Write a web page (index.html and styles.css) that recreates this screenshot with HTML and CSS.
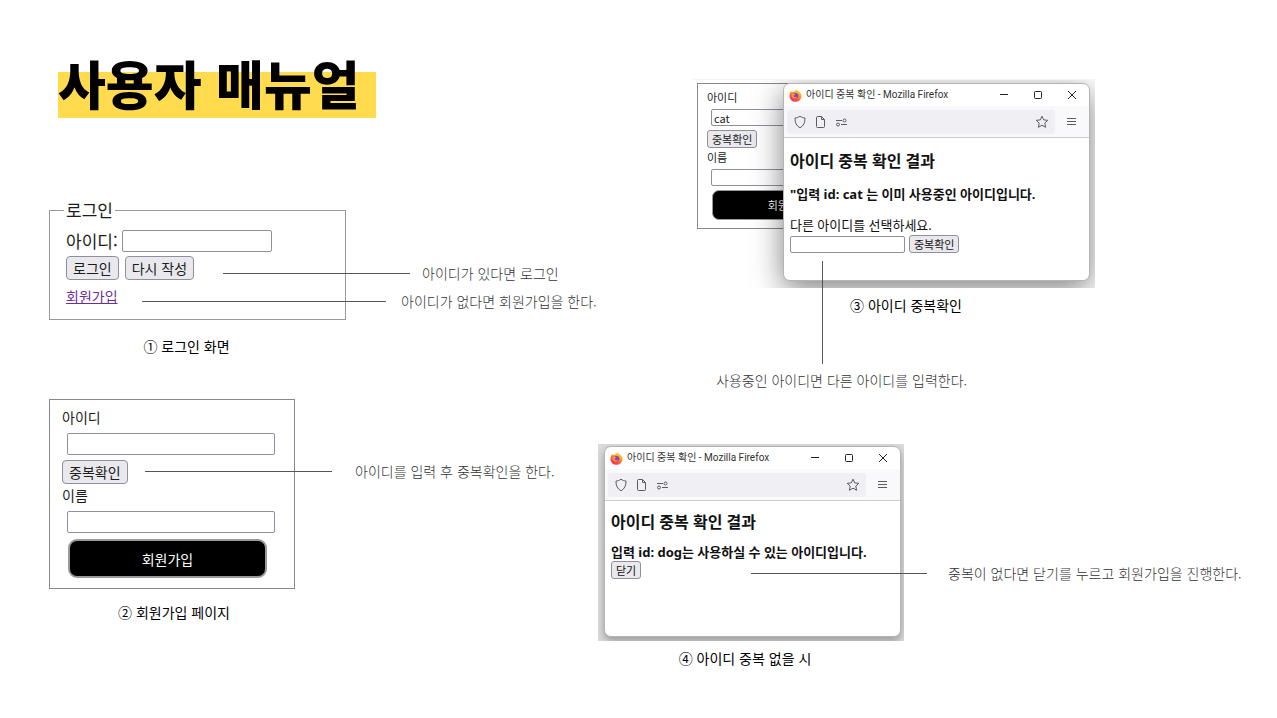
FILE: index.html
```html
<!DOCTYPE html>
<html lang="ko">
<head>
<meta charset="utf-8">
<meta name="viewport" content="width=device-width, initial-scale=1">
<title>사용자 매뉴얼</title>
<link rel="stylesheet" href="styles.css">
</head>
<body>
<svg class="sprite" aria-hidden="true">
  <defs>
    <linearGradient id="flame" x1="0.8" y1="0" x2="0.2" y2="1">
      <stop offset="0" stop-color="#ffe226"/><stop offset="0.45" stop-color="#ff8a1c"/><stop offset="1" stop-color="#f5156c"/>
    </linearGradient>
    <symbol id="firefox" viewBox="0 0 14 14">
      <path d="M2.2 2.4 3.6 3.6 5 2.6 5.4 3.4C6.400 1.800 7.600 1 8.800.6 8.700 1.600 9.500 2.200 10.400 2.800 11 2.900 13.600 4.600 13.500 7.800A6.500 6 0 0 1 .5 7.800C.5 5.400 1.200 4 2.200 2.400Z" fill="url(#flame)"/>
      <circle cx="7" cy="7.200" r="3" fill="#7542e5"/>
      <path d="M3 5.600C4.500 4.600 6 5 7 5.800 6.300 6.700 5.200 6.500 5 7.500 5.400 9.200 7.800 9.300 9 8.200 8.400 10.200 5.800 11 4.200 9.500 3 8.500 2.700 7 3 5.600Z" fill="#ff9a1f"/>
    </symbol>
    <symbol id="minimize" viewBox="0 0 10 10"><path d="M1 4.500H9" /></symbol>
    <symbol id="maximize" viewBox="0 0 10 10"><rect x="1.500" y="1.500" width="7" height="7" rx="1"/></symbol>
    <symbol id="close" viewBox="0 0 10 10"><path d="M1 1 9 9M9 1 1 9"/></symbol>
    <symbol id="shield" viewBox="0 0 14 14"><path d="M7 1.200C8.500 2.400 10.200 2.900 12 3 12.200 7.500 10.500 11 7 12.800 3.500 11 1.800 7.500 2 3 3.800 2.900 5.500 2.400 7 1.200Z"/></symbol>
    <symbol id="page" viewBox="0 0 14 14"><path d="M3.500 1.500H7.500L10.500 4.500V11.500A1 1 0 0 1 9.500 12.500H3.500A1 1 0 0 1 2.500 11.500V2.500A1 1 0 0 1 3.500 1.500ZM7.500 1.500V4.500H10.500"/></symbol>
    <symbol id="sliders" viewBox="0 0 14 14"><path d="M1 5.500H7M6 9.500H12"/><circle cx="9.500" cy="5.500" r="1.500"/><circle cx="3" cy="9.500" r="1.500"/></symbol>
    <symbol id="star" viewBox="0 0 14 14"><path d="M7 1.200 8.700 4.900 12.800 5.300 9.800 8.100 10.600 12.300 7 10.200 3.400 12.300 4.200 8.100 1.200 5.300 5.300 4.900Z"/></symbol>
    <symbol id="menu" viewBox="0 0 14 14"><path d="M2 3.500H11M2 6.500H11M2 9.500H11"/></symbol>
  </defs>
</svg>

<main class="slide">
  <section class="column">
    <h1 class="title">사용자 매뉴얼</h1>

    <figure class="step step-login">
      <form class="login">
        <fieldset class="login-box">
          <legend class="login-legend">로그인</legend>
          <div class="login-row"><label for="login-id">아이디:</label><input class="field login-field" id="login-id" type="text"></div>
          <div class="login-row buttons"><button class="button" type="button">로그인</button><button class="button" type="reset">다시 작성</button></div>
          <a class="join-link" href="#join">회원가입</a>
        </fieldset>
      </form>
      <figcaption class="caption">① 로그인 화면</figcaption>
      <p class="callout callout-login">아이디가 있다면 로그인</p>
      <p class="callout callout-join">아이디가 없다면 회원가입을 한다.</p>
    </figure>

    <figure class="step step-join" id="join">
      <form class="join">
        <label class="join-label" for="join-id">아이디</label>
        <input class="field join-field" id="join-id" type="text">
        <button class="button" type="button">중복확인</button>
        <label class="join-label" for="join-name">이름</label>
        <input class="field join-field" id="join-name" type="text">
        <button class="submit" type="button">회원가입</button>
      </form>
      <figcaption class="caption">② 회원가입 페이지</figcaption>
      <p class="callout callout-check">아이디를 입력 후 중복확인을 한다.</p>
    </figure>
  </section>

  <section class="column column-right">
    <figure class="step step-taken">
      <div class="shot shot-taken">
        <form class="join join-small">
          <label class="join-label" for="small-id">아이디</label>
          <input class="field join-field" id="small-id" type="text" value="cat">
          <button class="button small" type="button">중복확인</button>
          <label class="join-label" for="small-name">이름</label>
          <input class="field join-field" id="small-name" type="text">
          <button class="submit" type="button">회원가입</button>
        </form>
        <article class="window window-over">
          <header class="titlebar">
            <svg class="logo"><use href="#firefox"/></svg>
            <span class="window-title">아이디 중복 확인 - Mozilla Firefox</span>
            <button class="window-button" type="button" aria-label="최소화"><svg class="glyph"><use href="#minimize"/></svg></button>
            <button class="window-button" type="button" aria-label="최대화"><svg class="glyph"><use href="#maximize"/></svg></button>
            <button class="window-button" type="button" aria-label="창 닫기"><svg class="glyph"><use href="#close"/></svg></button>
          </header>
          <div class="toolbar">
            <div class="address">
              <svg class="icon"><use href="#shield"/></svg>
              <svg class="icon"><use href="#page"/></svg>
              <svg class="icon"><use href="#sliders"/></svg>
              <svg class="icon icon-end"><use href="#star"/></svg>
            </div>
            <button class="menu-button" type="button" aria-label="메뉴"><svg class="icon"><use href="#menu"/></svg></button>
          </div>
          <div class="page">
            <h2 class="page-title">아이디 중복 확인 결과</h2>
            <p class="page-result">"입력 id: cat 는 이미 사용중인 아이디입니다.</p>
            <label class="page-label" for="other-id">다른 아이디를 선택하세요.</label>
            <div class="page-row"><input class="field page-field" id="other-id" type="text"><button class="button small" type="button">중복확인</button></div>
          </div>
        </article>
      </div>
      <figcaption class="caption">③ 아이디 중복확인</figcaption>
      <p class="note">사용중인 아이디면 다른 아이디를 입력한다.</p>
    </figure>

    <figure class="step step-free">
      <div class="shot shot-free">
        <article class="window">
          <header class="titlebar">
            <svg class="logo"><use href="#firefox"/></svg>
            <span class="window-title">아이디 중복 확인 - Mozilla Firefox</span>
            <button class="window-button" type="button" aria-label="최소화"><svg class="glyph"><use href="#minimize"/></svg></button>
            <button class="window-button" type="button" aria-label="최대화"><svg class="glyph"><use href="#maximize"/></svg></button>
            <button class="window-button" type="button" aria-label="창 닫기"><svg class="glyph"><use href="#close"/></svg></button>
          </header>
          <div class="toolbar">
            <div class="address">
              <svg class="icon"><use href="#shield"/></svg>
              <svg class="icon"><use href="#page"/></svg>
              <svg class="icon"><use href="#sliders"/></svg>
              <svg class="icon icon-end"><use href="#star"/></svg>
            </div>
            <button class="menu-button" type="button" aria-label="메뉴"><svg class="icon"><use href="#menu"/></svg></button>
          </div>
          <div class="page page-free">
            <h2 class="page-title">아이디 중복 확인 결과</h2>
            <p class="page-result">입력 id: dog는 사용하실 수 있는 아이디입니다.</p>
            <button class="button small" type="button">닫기</button>
          </div>
        </article>
      </div>
      <figcaption class="caption">④ 아이디 중복 없을 시</figcaption>
      <p class="callout callout-close">중복이 없다면 닫기를 누르고 회원가입을 진행한다.</p>
    </figure>
  </section>
</main>
</body>
</html>
```

FILE: styles.css
```css
* { box-sizing: border-box; }

body {
  margin: 0;
  background: #fff;
  color: #1c1c1c;
  font-family: "Noto Sans CJK KR", sans-serif;
  font-size: 14px;
  line-height: 22px;
}

h1, h2, p, figure, fieldset { margin: 0; }
button, input { font-family: inherit; color: inherit; margin: 0; }
.sprite { position: absolute; width: 0; height: 0; }

.slide {
  display: grid;
  grid-template-columns: 598fr 679fr;
  align-items: start;
}
.column { padding: 58px 0 0 49px; }
.column-right { padding: 79px 0 0; }

.title {
  width: fit-content;
  margin-left: 9px;
  padding: 0 16px 10px 0;
  background: linear-gradient(transparent 14px, #ffdb4d 14px);
  color: #000;
  font-size: 52px;
  font-weight: 900;
  line-height: 50px;
  white-space: nowrap;
}

/* Steps and their captions */
.step { position: relative; }
.step-login { width: 297px; margin-top: 80px; }
.step-join { width: 246px; margin-top: 42px; }
.step-taken { width: 402px; margin-left: 95px; }
.step-free { width: 306px; margin-top: 53px; }

.caption {
  margin-top: 6px;
  color: #000;
  text-align: center;
  white-space: nowrap;
}
.step-login .caption { margin-top: 15px; padding-right: 22px; }
.step-join .caption { margin-top: 12px; padding-left: 4px; }
.step-taken .caption { padding-left: 24px; }
.step-free .caption { padding-right: 12px; }

/* Notes joined to a control by a leader line */
.callout, .note {
  color: #333;
  font-weight: 300;
  white-space: nowrap;
}
.callout {
  position: absolute;
  display: flex;
  align-items: center;
}
.callout::before {
  content: "";
  height: 1px;
  background: #555;
}
.callout-login { left: 174px; top: 64px; gap: 12px; }
.callout-join { left: 93px; top: 92px; gap: 15px; }
.callout-check { left: 96px; top: 61px; gap: 23px; }
.callout-close { left: 153px; top: 118px; gap: 21px; }
.callout-login::before { width: 187px; }
.callout-join::before { width: 244px; }
.callout-check::before { width: 187px; }
.callout-close::before { width: 176px; }

.note { margin: 53px 0 0 23px; }
.step-taken::after {
  content: "";
  position: absolute;
  left: 129px;
  top: 182px;
  width: 1px;
  height: 103px;
  background: #555;
}

/* Form controls */
.field {
  height: 22px;
  padding: 0 2px;
  border: 1px solid #8f8f9d;
  border-radius: 2px;
  background: #fff;
  font-size: 11px;
}
.button {
  height: 24px;
  padding: 0 6px;
  border: 1px solid #8f8f9d;
  border-radius: 4px;
  background: #e9e9ed;
  font-size: 14px;
  line-height: 20px;
}
.small {
  height: 18px;
  padding: 0 4px;
  border-radius: 3px;
  font-size: 11px;
  line-height: 16px;
}

.login-box {
  padding: 8px 16px 12px;
  border: 1px solid #999;
}
.login-legend {
  margin-left: -2px;
  padding: 0 2px;
  font-size: 17px;
  line-height: 24px;
}
.login-row {
  display: flex;
  align-items: center;
  gap: 4px;
  margin-bottom: 4px;
  font-size: 17px;
}
.login-field { width: 150px; }
.buttons { gap: 6px; }
.join-link {
  display: block;
  width: fit-content;
  margin-top: 5px;
  color: #6a2f9c;
}

.join {
  display: flex;
  flex-direction: column;
  align-items: flex-start;
  padding: 6px 12px 10px;
  border: 1px solid #888;
}
.join-field { width: 208px; margin: 5px 0 5px 5px; }
.submit {
  width: 199px;
  height: 39px;
  margin: 1px 0 0 6px;
  border: 2px solid #999;
  border-radius: 9px;
  background: #000;
  color: #fff;
  font-size: 14px;
  line-height: 20px;
}

.join-small {
  width: 200px;
  padding: 4px 9px 8px;
  font-size: 11px;
  line-height: 18px;
}
.join-small .join-field { width: 160px; height: 17px; margin: 3px 0 4px 4px; }
.join-small .submit {
  width: 152px;
  height: 30px;
  margin: 0 0 0 5px;
  border-width: 1px;
  border-radius: 7px;
  font-size: 11px;
}

/* Captured windows */
.shot { position: relative; overflow: hidden; }
.shot-taken { height: 209px; padding: 3px 4px; border-top: 1px solid #f4f4f4; }
.shot-free { height: 197px; padding: 2px 3px 4px 6px; background: #dcdcdc; }

.window {
  height: 100%;
  overflow: hidden;
  border: 1px solid #b4b4b4;
  border-radius: 7px;
  background: #fff;
  box-shadow: 0 4px 8px rgba(0, 0, 0, 0.3);
}
.window-over {
  position: absolute;
  left: 90px;
  right: 5px;
  top: 3px;
  bottom: 7px;
  height: auto;
  box-shadow: 0 8px 30px rgba(0, 0, 0, 0.5);
}
.titlebar {
  display: flex;
  align-items: center;
  height: 22px;
  padding: 0 0 0 5px;
}
.logo { width: 13px; height: 13px; margin-right: 4px; }
.window-title {
  flex: 1;
  color: #333;
  font-family: Roboto, "Noto Sans CJK KR", sans-serif;
  font-size: 10px;
  white-space: nowrap;
}
.window-button, .menu-button {
  display: grid;
  place-items: center;
  width: 34px;
  height: 22px;
  padding: 0;
  border: 0;
  background: none;
}
.glyph { width: 10px; height: 10px; fill: none; stroke: #222; stroke-width: 1; }
.toolbar {
  display: flex;
  align-items: center;
  height: 32px;
  padding-left: 3px;
  border-bottom: 1px solid #ccccd2;
  background: #f9f9fb;
}
.page-free { padding-top: 11px; }
.address {
  display: flex;
  flex: 1;
  align-items: center;
  gap: 7px;
  height: 24px;
  padding: 0 6px;
  border-radius: 3px;
  background: #f0f0f4;
}
.icon { width: 14px; height: 14px; fill: none; stroke: #5b5b66; stroke-width: 1; }
.icon-end { margin-left: auto; }

.page {
  padding: 12px 6px;
  color: #111;
  font-family: "Noto Sans", "Noto Sans CJK KR", sans-serif;
  font-size: 13px;
  line-height: 22px;
  white-space: nowrap;
}
.page-title { font-size: 16px; line-height: 22px; }
.page-result { margin-top: 11px; font-weight: 700; }
.page-label { display: block; margin-top: 10px; line-height: 20px; }
.page-row { display: flex; align-items: center; gap: 4px; }
.page-field { width: 115px; height: 17px; }
.page .button { font-family: "Noto Sans CJK KR", sans-serif; }
.page.page-free { padding-top: 10px; }
.page-free .page-result { margin-top: 10px; line-height: 18px; }
.page-free .button { display: block; }
```
